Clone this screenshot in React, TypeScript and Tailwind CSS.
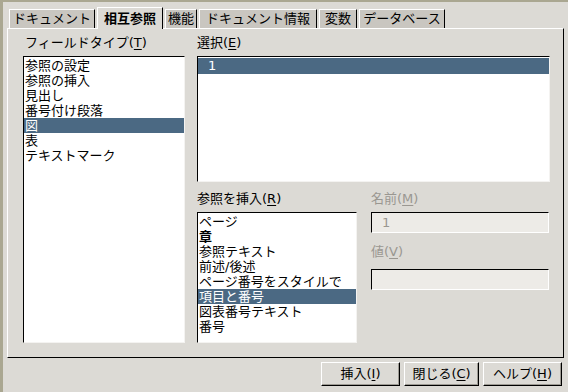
import React from "react";

const font = { fontFamily: '"DejaVu Sans", "Noto Sans CJK JP", sans-serif' };

const tabs = [
  { label: "ドキュメント", w: "w-[86px]" },
  { label: "相互参照", w: "w-[66px]", active: true },
  { label: "機能", w: "w-[32px]" },
  { label: "ドキュメント情報", w: "w-[118px]" },
  { label: "変数", w: "w-[38px]" },
  { label: "データベース", w: "w-[86px]" },
];

const fieldTypes = ["参照の設定", "参照の挿入", "見出し", "番号付け段落", "図", "表", "テキストマーク"];
const insertTypes = [
  "ページ",
  "章",
  "参照テキスト",
  "前述/後述",
  "ページ番号をスタイルで",
  "項目と番号",
  "図表番号テキスト",
  "番号",
];

function Mnemonic({ text, k }: { text: string; k: string }) {
  return (
    <>
      {text}(<span className="underline underline-offset-2">{k}</span>)
    </>
  );
}

function ListBox({
  items,
  selected,
  className,
}: {
  items: string[];
  selected: number;
  className: string;
}) {
  return (
    <div
      className={`bg-white border-t border-l border-t-black border-l-black border-r border-b border-r-[#f4f3f1] border-b-[#f4f3f1] pt-px ${className}`}
    >
      {items.map((it, i) => (
        <div
          key={it}
          className={`h-[15px] leading-[15px] pl-px whitespace-nowrap ${
            i === selected ? "bg-[#4b6983] text-white" : "text-black"
          } ${it === "章" ? "font-bold" : ""}`}
        >
          {it}
        </div>
      ))}
    </div>
  );
}

function Field({ value }: { value?: string }) {
  return (
    <div className="h-[21px] bg-[#edebe7] border-t border-l border-t-black border-l-black border-r border-b border-r-white border-b-white pl-[10px] leading-[19px] text-[#9a9791]">
      {value}
    </div>
  );
}

function Button({ children, w }: { children: React.ReactNode; w: string }) {
  return (
    <div
      className={`${w} h-[24px] flex items-center justify-center border-t border-l border-t-white border-l-white border-r border-b border-r-black border-b-black shadow-[inset_-1px_-1px_0_#9d9a93] text-black`}
    >
      {children}
    </div>
  );
}

export default function App() {
  return (
    <div
      style={font}
      className="w-[568px] h-[392px] bg-[#dcdad5] border-l-[3px] border-t-2 border-[#aaa791] text-[13px] overflow-hidden"
    >
      {/* tabs */}
      <div className="flex items-end gap-[2px] h-[21px] mt-[5px] ml-[6px]">
        {tabs.map((t) =>
          t.active ? (
            <div
              key={t.label}
              className={`${t.w} h-[22px] -mb-px relative z-10 bg-[#dcdad5] border-t border-l border-t-white border-l-white border-r border-r-black font-bold flex items-center justify-center text-black`}
            >
              {t.label}
            </div>
          ) : (
            <div
              key={t.label}
              className={`${t.w} h-[19px] bg-[#c9c6c0] border-t border-l border-t-white border-l-white border-r border-r-black flex items-center justify-center text-black`}
            >
              {t.label}
            </div>
          )
        )}
      </div>

      {/* panel */}
      <div className="ml-[4px] w-[557px] h-[330px] border-t border-l border-t-white border-l-white border-r border-b border-r-black border-b-black pt-[6px] pl-[15px] flex gap-[12px]">
        <div className="w-[162px] flex flex-col">
          <div className="h-[16px] leading-[16px] pl-[2px] text-black">
            <Mnemonic text="フィールドタイプ" k="T" />
          </div>
          <ListBox items={fieldTypes} selected={4} className="mt-[5px] h-[287px]" />
        </div>

        <div className="w-[353px] flex flex-col">
          <div className="h-[16px] leading-[16px] text-black">
            <Mnemonic text="選択" k="E" />
          </div>
          <div className="mt-[5px] h-[126px] bg-white border-t border-l border-t-black border-l-black border-r border-b border-r-[#f4f3f1] border-b-[#f4f3f1] pt-px">
            <div className="h-[16px] leading-[16px] bg-[#4b6983] text-white pl-[10px]">1</div>
          </div>

          <div className="mt-[9px] flex gap-[14px]">
            <div className="w-[160px] flex flex-col">
              <div className="h-[16px] leading-[16px] text-black">
                <Mnemonic text="参照を挿入" k="R" />
              </div>
              <ListBox items={insertTypes} selected={5} className="mt-[5px] h-[131px]" />
            </div>
            <div className="w-[178px] flex flex-col">
              <div className="h-[16px] leading-[16px] text-[#9a9791]">
                <Mnemonic text="名前" k="M" />
              </div>
              <div className="mt-[5px]">
                <Field value="1" />
              </div>
              <div className="mt-[11px] h-[16px] leading-[16px] text-[#9a9791]">
                <Mnemonic text="値" k="V" />
              </div>
              <div className="mt-[9px]">
                <Field />
              </div>
            </div>
          </div>
        </div>
      </div>

      {/* buttons */}
      <div className="mt-[4px] pr-[6px] flex justify-end gap-[4px]">
        <Button w="w-[79px]">
          <Mnemonic text="挿入" k="I" />
        </Button>
        <Button w="w-[75px]">
          <Mnemonic text="閉じる" k="C" />
        </Button>
        <Button w="w-[79px]">
          <Mnemonic text="ヘルプ" k="H" />
        </Button>
      </div>
    </div>
  );
}
